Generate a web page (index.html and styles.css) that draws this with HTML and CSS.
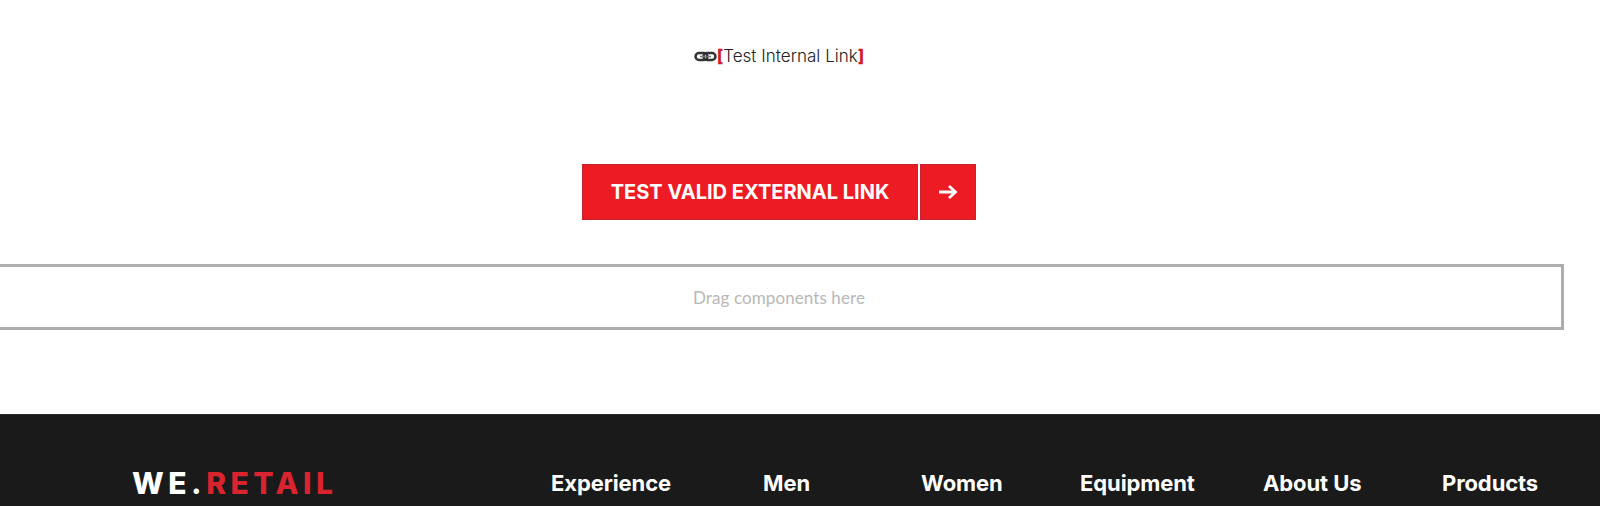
FILE: index.html
```html
<!DOCTYPE html>
<html lang="en">
<head>
  <meta charset="UTF-8">
  <meta name="viewport" content="width=device-width, initial-scale=1.0">
  <title>We.Retail</title>
  <link rel="stylesheet" href="styles.css">
</head>
<body>
  <main class="content">
    <p class="text-link">
      <svg class="chain" viewBox="0 0 23 11" width="23" height="11" aria-hidden="true">
        <rect x="1.500" y="2" width="12" height="7" rx="3.500" />
        <rect x="9.500" y="2" width="12" height="7" rx="3.500" />
        <path d="M6 5.500h11" />
      </svg><span class="bracket">[</span>Test Internal Link<span class="bracket">]</span>
    </p>
    <div class="cta">
      <a class="cta-label" href="#">TEST VALID EXTERNAL LINK</a>
      <a class="cta-arrow" href="#" aria-label="Open link">
        <svg viewBox="0 0 20 16" width="20" height="16" aria-hidden="true">
          <path d="M1 8h16M11 2l6.500 6-6.500 6" />
        </svg>
      </a>
    </div>
    <div class="dropzone">Drag components here</div>
  </main>
  <footer class="footer">
    <div class="logo">WE<span class="logo-dot">.</span><span class="logo-red">RETAIL</span></div>
    <nav class="footer-nav">
      <a href="#">Experience</a>
      <a href="#">Men</a>
      <a href="#">Women</a>
      <a href="#">Equipment</a>
      <a href="#">About Us</a>
      <a href="#">Products</a>
    </nav>
  </footer>
</body>
</html>
```

FILE: styles.css
```css
html, body {
  margin: 0;
  height: 506px;
  overflow: hidden;
  background: #fff;
}
body {
  font-family: 'Inter', sans-serif;
  color: #222;
}
.content {
  width: 1570px;
  height: 414px;
  margin-left: -6px;
  padding-top: 44px;
  box-sizing: border-box;
  display: flex;
  flex-direction: column;
  align-items: center;
}
.text-link {
  margin: 0;
  height: 24px;
  line-height: 24px;
  font-size: 17px;
  font-weight: 300;
  letter-spacing: 0.03px;
  display: flex;
  align-items: center;
}
.chain {
  fill: none;
  stroke: #333;
  stroke-width: 2.500;
}
.chain path {
  stroke-width: 1.500;
  stroke: #777;
}
.bracket {
  color: #d2202a;
  font-weight: 800;
}
.cta {
  display: flex;
  gap: 2px;
  height: 56px;
  margin-top: 96px;
}
.cta a {
  display: flex;
  align-items: center;
  justify-content: center;
  box-sizing: border-box;
  background: #ed1c24;
  border: 1px solid #c4242b;
  color: #fff;
  text-decoration: none;
}
.cta-label {
  width: 336px;
  font-size: 20px;
  font-weight: 700;
}
.cta-arrow {
  width: 56px;
}
.cta-arrow svg {
  fill: none;
  stroke: #fff;
  stroke-width: 2.800;
}
.dropzone {
  align-self: stretch;
  box-sizing: border-box;
  height: 66px;
  margin-top: 44px;
  border: 3px solid #adadad;
  display: flex;
  align-items: center;
  justify-content: center;
  font-family: 'Lato', sans-serif;
  font-size: 17px;
  letter-spacing: 0.1px;
  color: #b8b8b8;
}
.footer {
  height: 92px;
  box-sizing: border-box;
  padding: 52px 0 0 132px;
  background: #1a1a1a;
  display: flex;
  border-top: 1px solid #2a2a2a;
}
.logo {
  width: 419px;
  font-size: 30px;
  line-height: 32px;
  font-weight: 800;
  letter-spacing: 4.500px;
  color: #fff;
}
.logo-red {
  color: #d9232e;
}
.footer-nav {
  display: grid;
  grid-template-columns: 212px 158px 159px 183px 179px auto;
  align-items: start;
}
.footer-nav a {
  font-size: 22px;
  line-height: 32px;
  font-weight: 700;
  letter-spacing: -0.1px;
  color: #fff;
  text-decoration: none;
}
```
